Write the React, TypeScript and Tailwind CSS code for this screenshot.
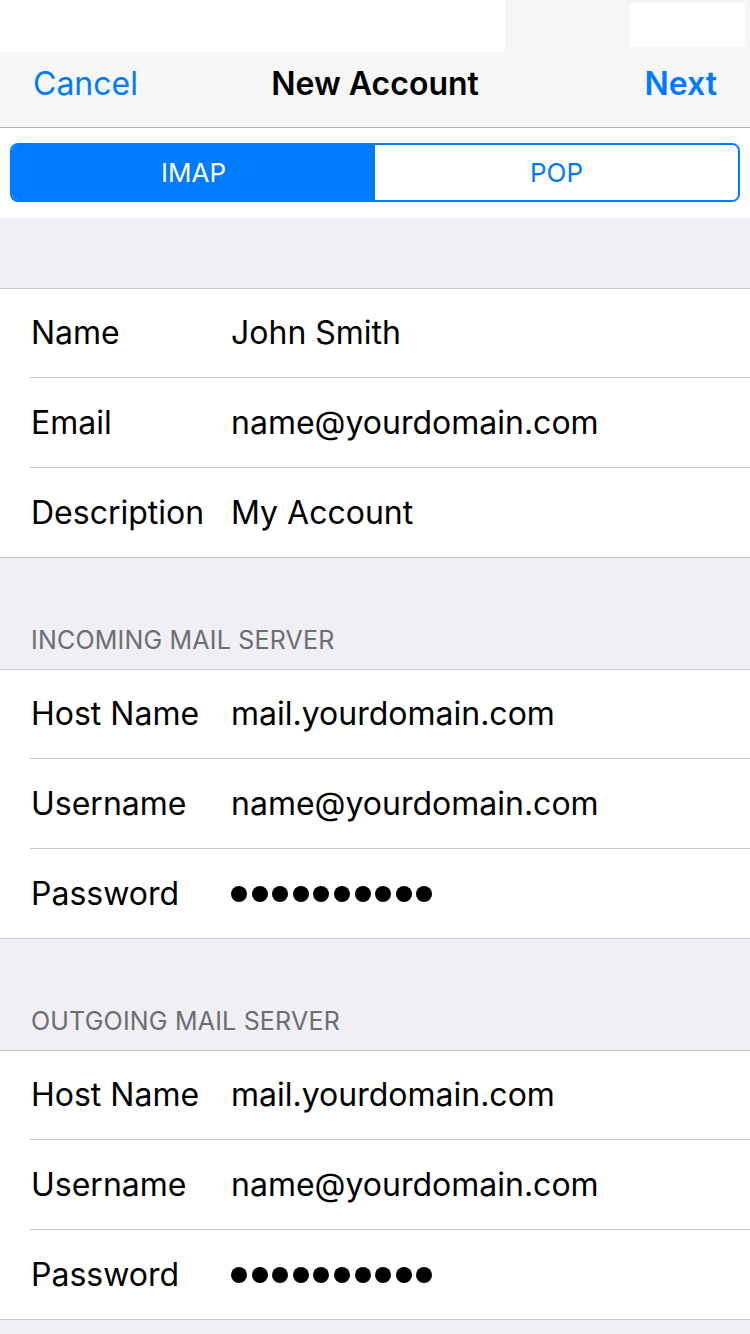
import React from 'react';

type Field = { label: string; value: string; secret?: boolean };

const account: Field[] = [
  { label: 'Name', value: 'John Smith' },
  { label: 'Email', value: 'name@yourdomain.com' },
  { label: 'Description', value: 'My Account' },
];

const incoming: Field[] = [
  { label: 'Host Name', value: 'mail.yourdomain.com' },
  { label: 'Username', value: 'name@yourdomain.com' },
  { label: 'Password', value: '', secret: true },
];

const outgoing: Field[] = [
  { label: 'Host Name', value: 'mail.yourdomain.com' },
  { label: 'Username', value: 'name@yourdomain.com' },
  { label: 'Password', value: '', secret: true },
];

const Dots = () => (
  <div className="flex items-center gap-[4.6px]">
    {Array.from({ length: 10 }).map((_, i) => (
      <span key={i} className="w-[16px] h-[16px] rounded-full bg-black" />
    ))}
  </div>
);

const Group = ({ rows }: { rows: Field[] }) => (
  <div className="bg-white border-y border-[#c8c7cc]">
    {rows.map((row, i) => {
      const last = i === rows.length - 1;
      return (
        <div key={row.label} className="pl-[30px]">
          <div
            className={`flex items-center text-[32px] text-black ${
              last ? 'h-[89px]' : i === 0 ? 'h-[89px] border-b border-[#c8c7cc]' : 'h-[90px] border-b border-[#c8c7cc]'
            }`}
          >
            <div className="w-[201px] pl-[1px]">{row.label}</div>
            {row.secret ? <Dots /> : <div>{row.value}</div>}
          </div>
        </div>
      );
    })}
  </div>
);

const SectionHeader = ({ title }: { title: string }) => (
  <div className="h-[111px] flex items-end px-[31px] pb-[10px] text-[25px] text-[#6d6d72] tracking-[0.2px]">
    {title}
  </div>
);

export default function App() {
  return (
    <div className="w-[750px] min-h-[1334px] bg-[#efeff4] font-['Inter',sans-serif] antialiased">
      {/* status bar */}
      <div className="h-[52px] bg-[#f6f6f7] flex">
        <div className="w-[505px] h-[52px] bg-white" />
        <div className="flex-1" />
        <div className="w-[115px] h-[44px] mt-[3px] mr-[5px] bg-white" />
      </div>

      {/* navigation */}
      <div className="h-[76px] bg-[#f6f6f7] border-b border-[#b2b2b2] grid grid-cols-3 items-center px-[33px] pb-[12px] text-[32px]">
        <div className="text-[#007aff]">Cancel</div>
        <div className="text-center font-semibold text-black whitespace-nowrap">New Account</div>
        <div className="text-right font-semibold text-[#007aff]">Next</div>
      </div>

      {/* IMAP / POP switch */}
      <div className="h-[90px] bg-white px-[10px] pt-[15px]">
        <div className="h-[59px] flex rounded-[8px] border-2 border-[#007aff] overflow-hidden text-[26px]">
          <div className="flex-1 bg-[#007aff] text-white flex items-center justify-center">IMAP</div>
          <div className="flex-1 bg-white text-[#007aff] flex items-center justify-center">POP</div>
        </div>
      </div>

      <div className="h-[70px]" />
      <Group rows={account} />

      <SectionHeader title="INCOMING MAIL SERVER" />
      <Group rows={incoming} />

      <SectionHeader title="OUTGOING MAIL SERVER" />
      <Group rows={outgoing} />
    </div>
  );
}
